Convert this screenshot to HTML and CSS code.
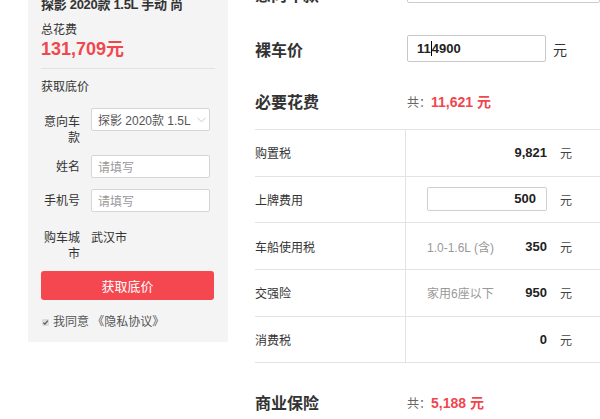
FILE: index.html
```html
<!DOCTYPE html>
<html lang="zh-CN">
<head>
<meta charset="utf-8">
<title>购车计算器</title>
<link rel="stylesheet" href="styles.css">
</head>
<body>
<div class="page">
  <aside class="panel">
    <div class="car-title">探影 2020款 1.5L 手动 尚</div>
    <div class="total-label">总花费</div>
    <div class="total-price">131,709元</div>
    <div class="divider"></div>
    <div class="form-title">获取底价</div>
    <div class="form-row row-model">
      <label class="form-label lbl-model">意向车款</label>
      <div class="select">
        <span class="select-text">探影 2020款 1.5L</span>
        <svg class="chev" width="9" height="6" viewBox="0 0 9 6"><path d="M0.5 0.8 L4.5 4.8 L8.5 0.8" fill="none" stroke="#c8c8c8" stroke-width="1"/></svg>
      </div>
    </div>
    <div class="form-row row-name">
      <label class="form-label lbl-input">姓名</label>
      <div class="field"><span class="ph">请填写</span></div>
    </div>
    <div class="form-row row-phone">
      <label class="form-label lbl-input">手机号</label>
      <div class="field"><span class="ph">请填写</span></div>
    </div>
    <div class="form-row row-city">
      <label class="form-label">购车城市</label>
      <div class="city">武汉市</div>
    </div>
    <button class="btn">获取底价</button>
    <div class="agree">
      <span class="chk"><svg width="7" height="7" viewBox="0 0 7 7"><path d="M1.3 3.6 L2.9 5.1 L5.8 1.6" fill="none" stroke="#555" stroke-width="1.2"/></svg></span>
      <span>我同意 《隐私协议》</span>
    </div>
  </aside>

  <main class="calc">
    <div class="sec sec-top">
      <div class="sec-head">意向车款</div>
      <div class="top-select">探影 2020款 1.5L 手动 尚酷版</div>
    </div>
    <div class="sec sec-price">
      <div class="sec-head">裸车价</div>
      <div class="price-input">11<span class="caret"></span>4900</div>
      <span class="unit-big">元</span>
    </div>
    <div class="sec sec-must">
      <div class="sec-head">必要花费</div>
      <div class="sum">共：<b>11,621 元</b></div>
    </div>
    <div class="table">
      <div class="trow">
        <div class="tname">购置税</div>
        <div class="tval"><span class="note"></span><span class="num">9,821</span><span class="yuan">元</span></div>
      </div>
      <div class="trow">
        <div class="tname">上牌费用</div>
        <div class="tval"><span class="note"></span><span class="num-input">500</span><span class="yuan">元</span></div>
      </div>
      <div class="trow">
        <div class="tname">车船使用税</div>
        <div class="tval"><span class="note">1.0-1.6L (含)</span><span class="num">350</span><span class="yuan">元</span></div>
      </div>
      <div class="trow">
        <div class="tname">交强险</div>
        <div class="tval"><span class="note">家用6座以下</span><span class="num">950</span><span class="yuan">元</span></div>
      </div>
      <div class="trow">
        <div class="tname">消费税</div>
        <div class="tval"><span class="note"></span><span class="num">0</span><span class="yuan">元</span></div>
      </div>
    </div>
    <div class="sec sec-ins">
      <div class="sec-head">商业保险</div>
      <div class="sum">共：<b>5,188 元</b></div>
    </div>
  </main>
</div>
</body>
</html>
```

FILE: styles.css
```css
html, body {
  margin: 0;
  padding: 0;
  background: #fff;
  overflow: hidden;
}
body {
  font-family: "Liberation Sans", "Noto Sans CJK SC", sans-serif;
  font-size: 12px;
  color: #333;
}
.page {
  display: flex;
  align-items: flex-start;
  margin-top: -20px;
}

/* left panel */
.panel {
  margin-left: 28px;
  width: 174px;
  padding: 15px 13px 12px;
  background: #f4f4f4;
  flex: none;
}
.car-title {
  font-size: 13px;
  font-weight: bold;
  line-height: 20px;
  white-space: nowrap;
  color: #333;
  letter-spacing: -0.3px;
}
.total-label {
  margin-top: 7px;
  line-height: 16px;
  color: #333;
}
.total-price {
  font-size: 18px;
  font-weight: bold;
  line-height: 22px;
  color: #f0474f;
}
.divider {
  margin-top: 8px;
  border-top: 1px solid #e1e1e1;
}
.form-title {
  margin-top: 10px;
  line-height: 16px;
}
.form-row {
  display: flex;
  align-items: flex-start;
}
.row-model { margin-top: 13px; }
.row-name { margin-top: 9px; }
.row-phone { margin-top: 11px; }
.row-city { margin-top: 18px; }
.form-label {
  width: 39px;
  text-align: right;
  line-height: 16px;
  margin-right: 11px;
  flex: none;
}
.lbl-model { padding-top: 6px; }
.lbl-input { padding-top: 4px; }
.select, .field {
  width: 111px;
  height: 21px;
  border: 1px solid #d6d6d6;
  border-radius: 2px;
  background: #fff;
  display: flex;
  align-items: center;
  padding-left: 6px;
  box-sizing: content-box;
  flex: none;
}
.select {
  color: #555;
  white-space: nowrap;
  overflow: hidden;
}
.select-text { flex: 1; overflow: hidden; }
.chev { flex: none; margin: 0 3px 0 1px; }
.ph { color: #999; }
.city {
  line-height: 16px;
}
.btn {
  display: block;
  margin-top: 9px;
  width: 173px;
  height: 29px;
  border: none;
  border-radius: 3px;
  background: #f5474f;
  color: #fff;
  font-family: inherit;
  font-size: 13px;
  padding: 0;
}
.agree {
  margin-top: 14px;
  display: flex;
  align-items: center;
  line-height: 16px;
  color: #555;
}
.chk {
  width: 7px;
  height: 7px;
  background: #dcdcdc;
  margin: 0 4px 0 1px;
  display: flex;
  border-radius: 1px;
}

/* right calculator */
.calc {
  margin-left: 27px;
  width: 345px;
  flex: none;
}
.sec {
  display: flex;
  align-items: center;
}
.sec-head {
  width: 152px;
  font-size: 16px;
  font-weight: bold;
  color: #333;
  flex: none;
  font-family: "Noto Sans CJK SC", sans-serif;
}
.sec-top {
  height: 27px;
}
.top-select {
  width: 300px;
  height: 25px;
  border: 1px solid #ccc;
  border-radius: 2px;
  box-sizing: content-box;
  line-height: 25px;
  padding-left: 9px;
  color: #333;
  font-size: 13px;
  white-space: nowrap;
  margin-top: -8px;
}
.sec-price {
  margin-top: 28px;
  height: 27px;
}
.price-input {
  width: 128px;
  height: 25px;
  border: 1px solid #c8c8c8;
  border-radius: 2px;
  padding-left: 9px;
  line-height: 25px;
  font-size: 13px;
  font-weight: bold;
  color: #222;
  flex: none;
  box-sizing: content-box;
  display: flex;
  align-items: center;
}
.caret {
  display: inline-block;
  width: 1px;
  height: 15px;
  background: #000;
}
.unit-big {
  margin-left: 7px;
  font-size: 14px;
  color: #333;
}
.sec-must {
  margin-top: 28px;
  height: 22px;
}
.sum {
  color: #666;
  font-size: 12px;
}
.sum b {
  color: #f0474f;
  font-size: 14px;
}
.table {
  margin-top: 17px;
  border-top: 1px solid #e3e3e3;
  width: 345px;
}
.trow {
  display: flex;
  height: 45.67px;
  border-bottom: 1px solid #e3e3e3;
}
.tname {
  width: 150px;
  border-right: 1px solid #e3e3e3;
  display: flex;
  align-items: center;
  flex: none;
}
.tval {
  flex: 1;
  display: flex;
  align-items: center;
}
.note {
  flex: 1;
  padding-left: 21px;
  color: #999;
}
.num {
  font-weight: bold;
  font-size: 13px;
  color: #222;
}
.num-input {
  width: 108px;
  height: 22px;
  border: 1px solid #cfcfcf;
  border-radius: 2px;
  padding-right: 10px;
  text-align: right;
  line-height: 22px;
  font-weight: bold;
  font-size: 13px;
  color: #222;
  box-sizing: content-box;
}
.yuan {
  width: 12px;
  margin-left: 13px;
  margin-right: 28px;
  color: #444;
}
.sec-ins {
  margin-top: 28px;
  height: 22px;
}
```
